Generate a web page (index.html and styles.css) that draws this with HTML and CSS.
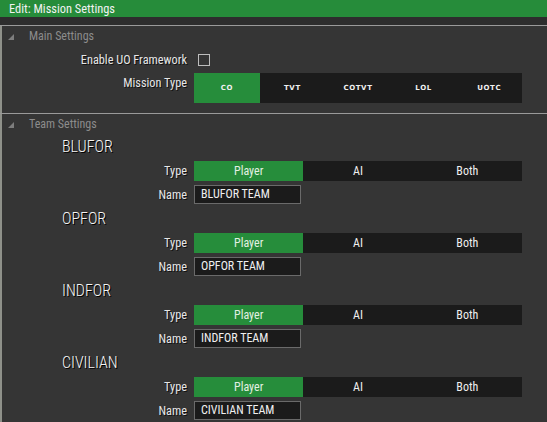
FILE: index.html
```html
<!DOCTYPE html>
<html>
<head>
<meta charset="utf-8">
<link rel="stylesheet" href="styles.css">
</head>
<body>
<div class="window">
  <div class="titlebar">Edit: Mission Settings</div>
  <div class="band"></div>
  <div class="content">
    <div class="section-head">
      <svg class="tri" width="6" height="6" viewBox="0 0 6 6"><polygon points="6,0 6,6 0,6" fill="#7d7d7d"/></svg>
      <span>Main Settings</span>
    </div>
    <div class="row row-check">
      <div class="label">Enable UO Framework</div>
      <div class="checkbox"></div>
    </div>
    <div class="row row-mission">
      <div class="label">Mission Type</div>
      <div class="seg seg-mission">
        <div class="opt on">CO</div>
        <div class="opt">TVT</div>
        <div class="opt">COTVT</div>
        <div class="opt">LOL</div>
        <div class="opt">UOTC</div>
      </div>
    </div>
    <div class="sep"></div>
    <div class="section-head section-team">
      <svg class="tri" width="6" height="6" viewBox="0 0 6 6"><polygon points="6,0 6,6 0,6" fill="#7d7d7d"/></svg>
      <span>Team Settings</span>
    </div>

    <div class="team">
      <div class="team-title">BLUFOR</div>
      <div class="row row-type">
        <div class="label">Type</div>
        <div class="seg seg-type"><div class="opt on">Player</div><div class="opt">AI</div><div class="opt">Both</div></div>
      </div>
      <div class="row row-name">
        <div class="label">Name</div>
        <div class="input">BLUFOR TEAM</div>
      </div>
    </div>

    <div class="team">
      <div class="team-title">OPFOR</div>
      <div class="row row-type">
        <div class="label">Type</div>
        <div class="seg seg-type"><div class="opt on">Player</div><div class="opt">AI</div><div class="opt">Both</div></div>
      </div>
      <div class="row row-name">
        <div class="label">Name</div>
        <div class="input">OPFOR TEAM</div>
      </div>
    </div>

    <div class="team">
      <div class="team-title">INDFOR</div>
      <div class="row row-type">
        <div class="label">Type</div>
        <div class="seg seg-type"><div class="opt on">Player</div><div class="opt">AI</div><div class="opt">Both</div></div>
      </div>
      <div class="row row-name">
        <div class="label">Name</div>
        <div class="input">INDFOR TEAM</div>
      </div>
    </div>

    <div class="team">
      <div class="team-title">CIVILIAN</div>
      <div class="row row-type">
        <div class="label">Type</div>
        <div class="seg seg-type"><div class="opt on">Player</div><div class="opt">AI</div><div class="opt">Both</div></div>
      </div>
      <div class="row row-name">
        <div class="label">Name</div>
        <div class="input">CIVILIAN TEAM</div>
      </div>
    </div>
  </div>
</div>
</body>
</html>
```
FILE: styles.css
```css
html, body {
  margin: 0;
  padding: 0;
}
body {
  width: 547px;
  height: 422px;
  overflow: hidden;
  background: #353535;
  font-family: "Roboto Condensed", "Liberation Sans Narrow", "DejaVu Sans Condensed", Roboto, sans-serif;
  color: #e8e8e8;
}
.window {
  display: flex;
  flex-direction: column;
  height: 422px;
}
.titlebar {
  height: 17px;
  background: #268c3a;
  color: #f2f2f2;
  font-size: 12.4px;
  line-height: 17px;
  padding-left: 9px;
}
.band {
  height: 8px;
  background: #2d2d2d;
  border-bottom: 1px solid #9a9a9a;
}
.content {
  flex: 1;
  border-left: 2px solid #8f918a;
  background: #353535;
  display: flex;
  flex-direction: column;
}
.section-head {
  height: 19px;
  display: flex;
  align-items: center;
  color: #8c8c8c;
  font-size: 12px;
}
.section-head .tri {
  margin-left: 6px;
  margin-right: 15px;
  margin-top: 2px;
}
.section-team {
  height: 19px;
}
.row {
  display: flex;
  align-items: center;
}
.label {
  width: 185px;
  text-align: right;
  font-size: 12.3px;
  color: #e6e6e6;
  margin-right: 7px;
  text-shadow: 1px 1px 0 #111;
}
.row-check {
  height: 16px;
  margin-top: 7px;
}
.checkbox {
  width: 10px;
  height: 10px;
  border: 1px solid #bdbdbd;
  margin-left: 4px;
}
.row-mission {
  margin-top: 5px;
  align-items: flex-start;
}
.row-mission .label {
  line-height: 20px;
}
.seg {
  display: flex;
  background: #1b1b1b;
  width: 328px;
}
.seg .opt {
  flex: 1;
  display: flex;
  align-items: center;
  justify-content: center;
  color: #f0f0f0;
}
.seg .opt.on {
  background: #268d3b;
}
.seg-mission {
  height: 30px;
}
.seg-mission .opt {
  font-family: "DejaVu Sans", sans-serif;
  font-weight: bold;
  font-size: 7px;
  letter-spacing: 0.6px;
}
.sep {
  height: 1px;
  background: #9a9a9a;
  margin-top: 10px;
  margin-left: -2px;
}
.team-title {
  height: 28px;
  line-height: 28px;
  padding-left: 60px;
  font-size: 16px;
  font-weight: 300;
  color: #f4f4f4;
  text-shadow: 1px 1px 0 #000;
}
.row-type {
  height: 20px;
}
.seg-type {
  height: 20px;
}
.seg-type .opt {
  font-size: 12px;
}
.seg-type .opt.on {
  color: #e2f0e2;
}
.row-name {
  height: 19px;
  margin-top: 4px;
  margin-bottom: 1px;
}
.input {
  box-sizing: border-box;
  width: 107px;
  height: 19px;
  border: 1px solid #6a6a6a;
  background: #1b1b1b;
  font-size: 12px;
  line-height: 17px;
  padding-left: 6px;
  color: #f0f0f0;
  white-space: nowrap;
  overflow: hidden;
}
```
